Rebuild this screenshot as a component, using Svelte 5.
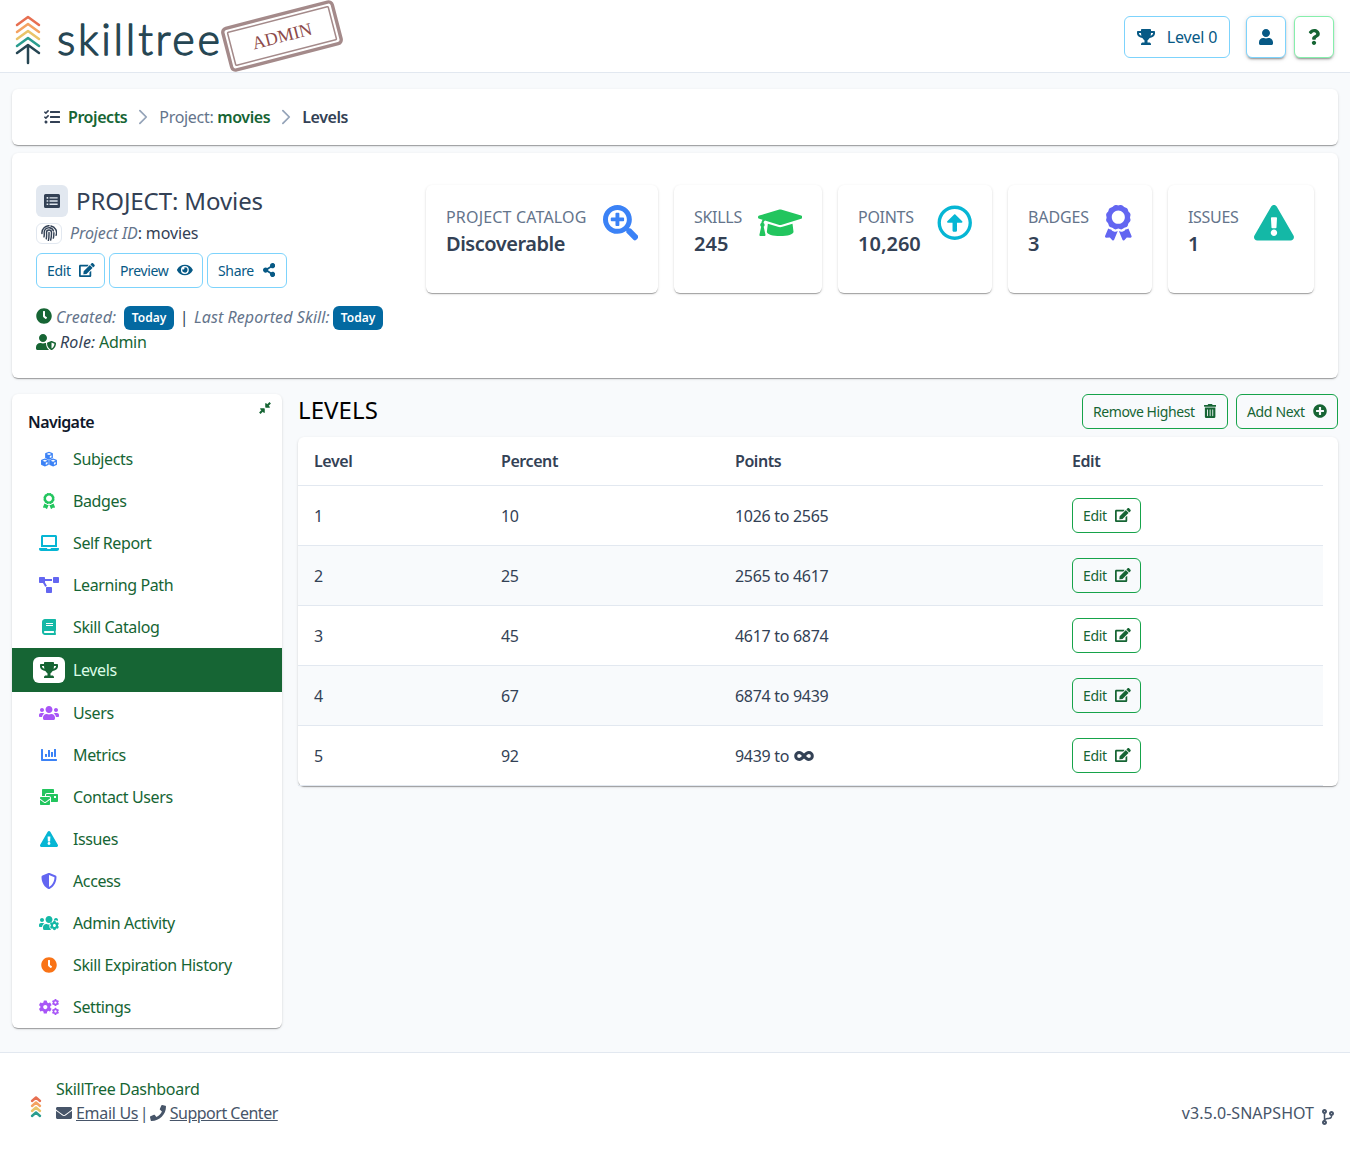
<script>
  const cog = 'M487.4 315.7l-42.6-24.6c4.3-23.2 4.3-47 0-70.2l42.6-24.6c4.9-2.8 7.1-8.6 5.5-14-11.1-35.6-30-67.8-54.7-94.6-3.8-4.1-10-5.1-14.8-2.3L380.8 110c-17.9-15.4-38.5-27.3-60.8-35.1V25.8c0-5.6-3.9-10.5-9.4-11.7-36.7-8.2-74.3-7.8-109.2 0-5.5 1.2-9.4 6.1-9.4 11.7V75c-22.2 7.9-42.8 19.8-60.8 35.1L88.7 85.5c-4.9-2.8-11-1.9-14.8 2.3-24.7 26.7-43.6 58.9-54.7 94.6-1.7 5.4.6 11.2 5.5 14L67.3 221c-4.3 23.2-4.3 47 0 70.2l-42.6 24.6c-4.9 2.8-7.1 8.6-5.5 14 11.1 35.6 30 67.8 54.7 94.6 3.8 4.1 10 5.1 14.8 2.3l42.6-24.6c17.9 15.4 38.5 27.3 60.8 35.1v49.2c0 5.6 3.9 10.5 9.4 11.7 36.7 8.2 74.3 7.8 109.2 0 5.5-1.2 9.4-6.1 9.4-11.7v-49.2c22.2-7.9 42.8-19.8 60.8-35.1l42.6 24.6c4.9 2.8 11 1.9 14.8-2.3 24.7-26.7 43.6-58.9 54.7-94.6 1.5-5.5-.7-11.3-5.6-14.1zM256 336c-44.1 0-80-35.9-80-80s35.9-80 80-80 80 35.9 80 80-35.9 80-80 80z';
  const cube = 'M0 -130L108 -88Q124 -80 124 -64V56Q124 72 110 80L0 130L-110 80Q-124 72 -124 56V-64Q-124 -80 -108 -88ZM0 -88L-78 -58L0 -26L78 -58ZM26 8V76L82 48V-16Z';

  // Each icon: viewBox width (height is 512) and its shapes; s = stroke width, t = transform.
  const icons = {
    trophy: [576, [{ d: 'M552 64H448V24c0-13.3-10.7-24-24-24H152c-13.3 0-24 10.7-24 24v40H24C10.7 64 0 74.7 0 88v56c0 35.7 22.5 72.4 61.9 100.7 31.5 22.7 69.8 37.1 110 41.7C203.3 338.5 240 360 240 360v72h-48c-35.3 0-64 20.7-64 56v12c0 6.6 5.4 12 12 12h296c6.6 0 12-5.4 12-12v-12c0-35.3-28.7-56-64-56h-48v-72s36.7-21.5 68.1-73.6c40.3-4.6 78.6-19 110-41.7 39.3-28.3 61.9-65 61.9-100.7V88c0-13.3-10.7-24-24-24zM99.3 192.8C74.9 175.2 64 155.6 64 144v-16h64.2c1 32.6 5.8 61.2 12.8 86.2-15.1-5.2-29.2-12.4-41.7-21.4zM512 144c0 16.1-17.7 36.1-35.3 48.8-12.5 9-26.7 16.2-41.8 21.4 7-25 11.8-53.6 12.8-86.2H512v16z' }]],
    user: [448, [{ d: 'M224 256c70.7 0 128-57.3 128-128S294.7 0 224 0 96 57.3 96 128s57.3 128 128 128zm89.6 32h-16.7c-22.2 10.2-46.9 16-72.9 16s-50.6-5.8-72.9-16h-16.7C60.2 288 0 348.2 0 422.4V464c0 26.5 21.5 48 48 48h352c26.5 0 48-21.5 48-48v-41.6c0-74.2-60.2-134.4-134.4-134.4z' }]],
    question: [384, [{ d: 'M202.021 0C122.202 0 70.503 32.703 29.914 91.026c-7.363 10.58-5.093 25.086 5.178 32.874l43.138 32.709c10.373 7.865 25.132 6.026 33.253-4.148 25.049-31.381 43.63-49.449 82.757-49.449 30.764 0 68.816 19.799 68.816 49.631 0 22.552-18.617 34.134-48.993 51.164-35.423 19.86-82.299 44.576-82.299 106.405V320c0 13.255 10.745 24 24 24h72.471c13.255 0 24-10.745 24-24v-5.773c0-42.86 125.268-44.645 125.268-160.627C377.504 66.256 286.902 0 202.021 0zM192 373.459c-38.196 0-69.271 31.075-69.271 69.271 0 38.195 31.075 69.27 69.271 69.27s69.271-31.075 69.271-69.271-31.075-69.27-69.271-69.27z' }]],
    tasks: [512, [{ d: 'M139.61 35.5a12 12 0 0 0-17 0L58.93 98.81l-22.7-22.12a12 12 0 0 0-17 0L3.53 92.41a12 12 0 0 0 0 17l47.59 47.4a12.78 12.78 0 0 0 17.61 0l15.59-15.62L156.52 69a12.09 12.09 0 0 0 .09-17zm0 159.19a12 12 0 0 0-17 0l-63.68 63.72-22.7-22.1a12 12 0 0 0-17 0L3.53 252a12 12 0 0 0 0 17L51 316.5a12.77 12.77 0 0 0 17.6 0l15.7-15.69 72.2-72.22a12 12 0 0 0 .09-16.9zM64 368c-26.49 0-48.59 21.5-48.59 48S37.53 464 64 464a48 48 0 0 0 0-96zm432 16H208a16 16 0 0 0-16 16v32a16 16 0 0 0 16 16h288a16 16 0 0 0 16-16v-32a16 16 0 0 0-16-16zm0-320H208a16 16 0 0 0-16 16v32a16 16 0 0 0 16 16h288a16 16 0 0 0 16-16V80a16 16 0 0 0-16-16zm0 160H208a16 16 0 0 0-16 16v32a16 16 0 0 0 16 16h288a16 16 0 0 0 16-16v-32a16 16 0 0 0-16-16z' }]],
    list: [512, [{ d: 'M48 32H464a48 48 0 0 1 48 48V432a48 48 0 0 1-48 48H48a48 48 0 0 1-48-48V80a48 48 0 0 1 48-48ZM84 128v52h52v-52ZM84 230v52h52v-52ZM84 332v52h52v-52ZM176 132v44h260v-44ZM176 234v44h260v-44ZM176 336v44h260v-44Z' }]],
    fingerprint: [512, [{ s: 46, d: 'M30 270V240A226 226 0 0 1 256 22M318 30A226 226 0 0 1 484 330M96 380Q108 330 102 240A154 154 0 0 1 400 190M412 250Q414 340 396 420M170 440Q186 350 176 240A80 80 0 0 1 336 240Q338 370 310 480M256 240Q260 400 236 500' }]],
    edit: [576, [{ d: 'M402.6 83.2l90.2 90.2c3.8 3.8 3.8 10 0 13.8L274.4 405.6l-92.8 10.3c-12.4 1.4-22.9-9.1-21.5-21.5l10.3-92.8L388.8 83.2c3.8-3.8 10-3.8 13.8 0zm162-22.9l-48.8-48.8c-15.2-15.2-39.9-15.2-55.2 0l-35.4 35.4c-3.8 3.8-3.8 10 0 13.8l90.2 90.2c3.8 3.8 10 3.8 13.8 0l35.4-35.4c15.2-15.3 15.2-40 0-55.2zM384 346.2V448H64V128h229.8c3.2 0 6.2-1.3 8.5-3.5l40-40c7.6-7.6 2.2-20.5-8.5-20.5H48C21.5 64 0 85.5 0 112v352c0 26.5 21.5 48 48 48h352c26.5 0 48-21.5 48-48V306.2c0-10.7-12.9-16-20.5-8.5l-40 40c-2.2 2.3-3.5 5.3-3.5 8.5z' }]],
    eye: [576, [{ d: 'M572.52 241.4C518.29 135.59 410.93 64 288 64S57.68 135.64 3.48 241.41a32.35 32.35 0 0 0 0 29.19C57.71 376.41 165.07 448 288 448s230.32-71.64 284.52-177.41a32.35 32.35 0 0 0 0-29.19zM288 400a144 144 0 1 1 144-144 143.93 143.93 0 0 1-144 144zm0-240a95.31 95.31 0 0 0-25.31 3.79 47.85 47.85 0 0 1-66.9 66.9A95.78 95.78 0 1 0 288 160z' }]],
    share: [448, [{ d: 'M352 320c-22.608 0-43.387 7.819-59.79 20.895l-102.486-64.054a96.551 96.551 0 0 0 0-41.683l102.486-64.054C308.613 184.181 329.392 192 352 192c53.019 0 96-42.981 96-96S405.019 0 352 0s-96 42.981-96 96c0 7.158.79 14.13 2.276 20.841L155.79 180.895C139.387 167.819 118.608 160 96 160c-53.019 0-96 42.981-96 96s42.981 96 96 96c22.608 0 43.387-7.819 59.79-20.895l102.486 64.054A96.301 96.301 0 0 0 256 416c0 53.019 42.981 96 96 96s96-42.981 96-96-42.981-96-96-96z' }]],
    clock: [512, [{ d: 'M256,8C119,8,8,119,8,256S119,504,256,504,504,393,504,256,393,8,256,8Zm92.49,313h0l-20,25a16,16,0,0,1-22.49,2.5h0l-67-49.72a40,40,0,0,1-15-31.23V112a16,16,0,0,1,16-16h32a16,16,0,0,1,16,16V256l58,42.5A16,16,0,0,1,348.49,321Z' }]],
    userShield: [640, [{ d: 'M622.3 271.1l-115.2-45c-4.1-1.6-12.6-3.7-22.2 0l-115.2 45c-10.7 4.2-17.7 14-17.7 24.9 0 111.6 68.7 188.8 132.9 213.9 9.6 3.7 18 1.6 22.2 0C558.4 489.9 640 420.5 640 296c0-10.9-7-20.7-17.7-24.9zM496 462.4V273.3l95.5 37.3c-5.6 87.1-60.9 135.4-95.5 151.8zM224 256c70.7 0 128-57.3 128-128S294.7 0 224 0 96 57.3 96 128s57.3 128 128 128zm96 40c0-2.5.8-4.8 1.1-7.2-2.5-.1-4.9-.8-7.5-.8h-16.7c-22.2 10.2-46.9 16-72.9 16s-50.6-5.8-72.9-16h-16.7C60.2 288 0 348.2 0 422.4V464c0 26.5 21.5 48 48 48h352c6.8 0 13.3-1.5 19.2-4-54-42.9-99.2-116.7-99.2-212z' }]],
    searchPlus: [512, [{ d: 'M304 192v32c0 6.6-5.4 12-12 12h-56v56c0 6.6-5.4 12-12 12h-32c-6.6 0-12-5.4-12-12v-56h-56c-6.6 0-12-5.4-12-12v-32c0-6.6 5.4-12 12-12h56v-56c0-6.6 5.4-12 12-12h32c6.6 0 12 5.4 12 12v56h56c6.6 0 12 5.4 12 12zm201 284.7L476.7 505c-9.4 9.4-24.6 9.4-33.9 0L343 405.3c-4.5-4.5-7-10.6-7-17V372c-35.3 27.6-79.7 44-128 44C93.1 416 0 322.9 0 208S93.1 0 208 0s208 93.1 208 208c0 48.3-16.4 92.7-44 128h16.3c6.4 0 12.5 2.5 17 7l99.7 99.7c9.3 9.4 9.3 24.6 0 34zM344 208c0-75.2-60.8-136-136-136S72 132.8 72 208s60.8 136 136 136 136-60.8 136-136z' }]],
    cap: [640, [{ d: 'M622.34 153.2L343.4 67.5c-15.2-4.67-31.6-4.67-46.79 0L17.66 153.2c-23.54 7.23-23.54 38.36 0 45.59l48.63 14.94c-10.67 13.19-17.23 29.28-17.88 46.9C38.78 266.15 32 276.11 32 288c0 10.78 5.68 19.85 13.86 25.65L20.33 428.53C18.11 438.52 25.71 448 35.94 448h56.11c10.24 0 17.84-9.48 15.62-19.47L82.14 313.65C90.32 307.85 96 298.78 96 288c0-11.57-6.47-21.25-15.66-26.87.76-15.02 8.44-28.3 20.69-36.72L296.6 284.5c9.06 2.78 26.44 6.25 46.79 0l278.95-85.7c23.55-7.24 23.55-38.36 0-45.6zM352.79 315.09c-28.53 8.76-52.84 3.92-65.59 0l-145.02-44.55L128 384c0 35.35 85.96 64 192 64s192-28.65 192-64l-14.18-113.47-145.03 44.56z' }]],
    arrowUp: [512, [{ d: 'M256 504c137 0 248-111 248-248S393 8 256 8 8 119 8 256s111 248 248 248zm0-448c110.5 0 200 89.5 200 200s-89.5 200-200 200S56 366.5 56 256 145.5 56 256 56zm20 328h-40c-6.6 0-12-5.4-12-12V256h-67c-10.7 0-16-12.9-8.5-20.5l99-99c4.7-4.7 12.3-4.7 17 0l99 99c7.6 7.6 2.2 20.5-8.5 20.5h-67v116c0 6.6-5.4 12-12 12z' }]],
    award: [384, [{ d: 'M97.12 362.63c-8.69-8.69-4.16-6.24-25.12-11.85-9.51-2.55-17.87-7.45-25.43-13.32L1.2 448.7c-4.39 10.77 3.81 22.47 15.43 22.03l52.69-2.01L105.56 507c8 8.44 22.04 5.81 26.43-4.96l52.05-127.62c-10.84 6.04-22.87 9.58-35.31 9.58-19.5 0-37.82-7.59-51.61-21.37zM382.8 448.7l-45.37-111.24c-7.56 5.88-15.92 10.77-25.43 13.32-21.07 5.64-16.45 3.18-25.12 11.85-13.79 13.78-32.12 21.37-51.62 21.37-12.44 0-24.47-3.55-35.31-9.58L252 502.04c4.39 10.77 18.44 13.4 26.43 4.96l36.25-38.28 52.69 2.01c11.62.44 19.82-11.27 15.43-22.03zM263 340c15.28-15.55 17.03-14.21 38.79-20.14 13.89-3.79 24.75-14.84 28.47-28.98 7.48-28.4 5.54-24.97 25.95-45.75 10.17-10.35 14.14-25.44 10.42-39.58-7.47-28.38-7.48-24.42 0-52.83 3.72-14.14-.25-29.23-10.42-39.58-20.41-20.78-18.47-17.36-25.95-45.75-3.72-14.14-14.58-25.19-28.47-28.98-27.88-7.61-24.52-5.62-44.95-26.41-10.17-10.35-25-14.4-38.89-10.61-27.87 7.6-23.98 7.61-51.9 0-13.89-3.79-28.72.25-38.89 10.61-20.41 20.78-17.05 18.8-44.94 26.41-13.89 3.79-24.75 14.84-28.47 28.98-7.47 28.39-5.54 24.97-25.95 45.75-10.17 10.35-14.15 25.44-10.42 39.58 7.47 28.36 7.48 24.4 0 52.82-3.72 14.14.25 29.23 10.42 39.59 20.41 20.78 18.47 17.35 25.95 45.75 3.72 14.14 14.58 25.19 28.47 28.98C104.6 325.96 106.27 325 121 340c13.23 13.47 33.84 15.88 49.74 5.82a39.676 39.676 0 0 1 42.53 0c15.89 10.06 36.5 7.65 49.73-5.82zM97.66 175.96c0-53.03 42.24-96.02 94.34-96.02s94.34 42.99 94.34 96.02-42.24 96.02-94.34 96.02-94.34-42.99-94.34-96.02z' }]],
    warning: [576, [{ d: 'M569.517 440.013C587.975 472.007 564.806 512 527.94 512H48.054c-36.937 0-59.999-40.055-41.577-71.987L246.423 23.985c18.467-32.009 64.72-31.951 83.154 0l239.94 416.028zM288 354c-25.405 0-46 20.595-46 46s20.595 46 46 46 46-20.595 46-46-20.595-46-46-46zm-43.673-165.346l7.418 136c.347 6.364 5.609 11.346 11.982 11.346h48.546c6.373 0 11.635-4.982 11.982-11.346l7.418-136c.375-6.874-5.098-12.654-11.982-12.654h-63.383c-6.884 0-12.356 5.78-11.981 12.654z' }]],
    cubes: [512, [{ d: cube, t: 'translate(256 150)' }, { d: cube, t: 'translate(125 366)' }, { d: cube, t: 'translate(387 366)' }]],
    laptop: [640, [{ d: 'M624 416H381.54c-.74 19.81-14.71 32-32.74 32H288c-18.69 0-33.02-17.47-32.77-32H16c-8.8 0-16 7.2-16 16v16c0 35.2 28.8 64 64 64h512c35.2 0 64-28.8 64-64v-16c0-8.8-7.2-16-16-16zM576 48c0-26.4-21.6-48-48-48H112C85.6 0 64 21.6 64 48v336h512V48zm-64 272H128V64h384v256z' }]],
    diagram: [640, [{ d: 'M384 320H256c-17.67 0-32 14.33-32 32v128c0 17.67 14.33 32 32 32h128c17.67 0 32-14.33 32-32V352c0-17.67-14.33-32-32-32zM192 32c0-17.67-14.33-32-32-32H32C14.33 0 0 14.33 0 32v128c0 17.67 14.33 32 32 32h95.72l73.16 128.04C211.98 300.98 232.4 288 256 288h.28L192 175.51V128h224V64H192V32zM608 0H480c-17.67 0-32 14.33-32 32v128c0 17.67 14.33 32 32 32h128c17.67 0 32-14.33 32-32V32c0-17.67-14.33-32-32-32z' }]],
    book: [448, [{ d: 'M448 360V24c0-13.3-10.7-24-24-24H96C43 0 0 43 0 96v320c0 53 43 96 96 96h328c13.3 0 24-10.7 24-24v-16c0-7.5-3.5-14.3-8.9-18.7-4.2-15.4-4.2-59.3 0-74.7 5.4-4.3 8.9-11.1 8.9-18.6zM128 134c0-3.3 2.7-6 6-6h212c3.3 0 6 2.7 6 6v20c0 3.3-2.7 6-6 6H134c-3.3 0-6-2.7-6-6v-20zm0 64c0-3.3 2.7-6 6-6h212c3.3 0 6 2.7 6 6v20c0 3.3-2.7 6-6 6H134c-3.3 0-6-2.7-6-6v-20zm253.4 250H96c-17.7 0-32-14.3-32-32 0-17.6 14.4-32 32-32h285.4c-1.9 17.1-1.9 46.9 0 64z' }]],
    users: [640, [{ d: 'M96 224c35.3 0 64-28.7 64-64s-28.7-64-64-64-64 28.7-64 64 28.7 64 64 64zm448 0c35.3 0 64-28.7 64-64s-28.7-64-64-64-64 28.7-64 64 28.7 64 64 64zm32 32h-64c-17.6 0-33.5 7.1-45.1 18.6 40.3 22.1 68.9 62 75.1 109.4h66c17.7 0 32-14.3 32-32v-32c0-35.3-28.7-64-64-64zm-256 0c61.9 0 112-50.1 112-112S381.9 32 320 32 208 82.1 208 144s50.1 112 112 112zm76.8 32h-8.3c-20.8 10-43.9 16-68.5 16s-47.6-6-68.5-16h-8.3C179.6 288 128 339.6 128 403.2V432c0 26.5 21.5 48 48 48h288c26.5 0 48-21.5 48-48v-28.8c0-63.6-51.6-115.2-115.2-115.2zm-223.7-13.4C161.5 263.1 145.6 256 128 256H64c-35.3 0-64 28.7-64 64v32c0 17.7 14.3 32 32 32h65.9c6.3-47.4 34.9-87.3 75.2-109.4z' }]],
    chart: [512, [{ d: 'M332.8 320h38.4c6.4 0 12.8-6.4 12.8-12.8V172.8c0-6.4-6.4-12.8-12.8-12.8h-38.4c-6.4 0-12.8 6.4-12.8 12.8v134.4c0 6.4 6.4 12.8 12.8 12.8zm96 0h38.4c6.4 0 12.8-6.4 12.8-12.8V76.8c0-6.4-6.4-12.8-12.8-12.8h-38.4c-6.4 0-12.8 6.4-12.8 12.8v230.4c0 6.4 6.4 12.8 12.8 12.8zm-288 0h38.4c6.4 0 12.8-6.4 12.8-12.8v-70.4c0-6.4-6.4-12.8-12.8-12.8h-38.4c-6.4 0-12.8 6.4-12.8 12.8v70.4c0 6.4 6.4 12.8 12.8 12.8zm96 0h38.4c6.4 0 12.8-6.4 12.8-12.8V108.8c0-6.4-6.4-12.8-12.8-12.8h-38.4c-6.4 0-12.8 6.4-12.8 12.8v198.4c0 6.4 6.4 12.8 12.8 12.8zM496 384H64V80c0-8.84-7.16-16-16-16H16C7.16 64 0 71.16 0 80v336c0 17.67 14.33 32 32 32h464c8.84 0 16-7.16 16-16v-32c0-8.84-7.16-16-16-16z' }]],
    mail: [576, [{ d: 'M160 448c-25.6 0-51.2-22.4-64-32-64-44.8-83.2-60.8-96-70.4V480c0 17.67 14.33 32 32 32h256c17.67 0 32-14.33 32-32V345.6c-12.8 9.6-32 25.6-96 70.4-12.8 9.6-38.4 32-64 32zm128-192H32c-17.67 0-32 14.33-32 32v16c25.6 19.2 22.4 19.2 115.2 86.4 9.6 6.4 28.8 25.6 44.8 25.6s35.2-19.2 44.8-22.4c92.8-67.2 89.6-67.2 115.2-86.4V288c0-17.67-14.33-32-32-32zm256-96H224c-17.67 0-32 14.33-32 32v32h96c33.21 0 60.59 25.42 63.71 57.82l.29-.22V416h192c17.67 0 32-14.33 32-32V192c0-17.67-14.33-32-32-32zm-32 128h-64v-64h64v64zm-352-96c0-35.29 28.71-64 64-64h224V32c0-17.67-14.33-32-32-32H96C78.33 0 64 14.33 64 32v192h96v-32z' }]],
    shield: [512, [{ d: 'M466.5 83.7l-192-80a48.15 48.15 0 0 0-36.9 0l-192 80C27.7 91.1 16 108.6 16 128c0 198.5 114.5 335.7 221.5 380.3 11.8 4.9 25.1 4.9 36.9 0C360.1 472.6 496 349.3 496 128c0-19.4-11.7-36.9-29.5-44.3zM256.1 446.3l-.1-381 175.9 73.3c-3.3 151.4-82.1 261.1-175.8 307.7z' }]],
    usersCog: [640, [
      { d: 'M96 224c35.3 0 64-28.7 64-64s-28.7-64-64-64-64 28.7-64 64 28.7 64 64 64zM320 256c61.9 0 112-50.1 112-112S381.9 32 320 32 208 82.1 208 144s50.1 112 112 112zM173.1 274.6C161.5 263.1 145.6 256 128 256H64c-35.3 0-64 28.7-64 64v32c0 17.7 14.3 32 32 32h65.9c6.3-47.4 34.9-87.3 75.2-109.4zM544 96a64 64 0 0 1 56 96Q540 150 484 182A64 64 0 0 1 544 96ZM243 288H252Q310 318 352 298Q316 330 334 370Q326 410 366 440L384 480H176a48 48 0 0 1-48-48V403A115 115 0 0 1 243 288Z' },
      { d: cog, t: 'translate(340 182) scale(.6)' }]],
    cogs: [640, [{ d: cog, t: 'translate(-14 42) scale(.84)' }, { d: cog, t: 'translate(410 -4) scale(.46)' }, { d: cog, t: 'translate(410 280) scale(.46)' }]],
    infinity: [640, [{ s: 96, d: 'M320 256C270 190 230 144 166 144A112 112 0 0 0 166 368C230 368 270 322 320 256C370 190 410 144 474 144A112 112 0 0 1 474 368C410 368 370 322 320 256Z' }]],
    envelope: [512, [{ d: 'M502.3 190.8c3.9-3.1 9.7-.2 9.7 4.7V400c0 26.5-21.5 48-48 48H48c-26.5 0-48-21.5-48-48V195.6c0-5 5.7-7.8 9.7-4.7 22.4 17.4 52.1 39.5 154.1 113.6 21.1 15.4 56.7 47.8 92.2 47.6 35.7.3 72-32.8 92.3-47.6 102-74.1 131.6-96.3 154-113.7zM256 320c23.2.4 56.6-29.2 73.4-41.4 132.7-96.3 142.8-104.7 173.4-128.7 5.8-4.5 9.2-11.5 9.2-18.9v-19c0-26.5-21.5-48-48-48H48c-26.5 0-48 21.5-48 48v19c0 7.4 3.4 14.3 9.2 18.9 30.6 23.9 40.7 32.4 173.4 128.7 16.8 12.2 50.2 41.8 73.4 41.4z' }]],
    phone: [512, [{ d: 'M493.4 24.6l-104-24c-11.3-2.6-22.9 3.3-27.5 13.9l-48 112c-4.2 9.8-1.4 21.3 6.9 28l60.6 49.6c-36 76.7-98.9 140.5-177.2 177.2l-49.6-60.6c-6.8-8.3-18.2-11.1-28-6.9l-112 48C3.9 366.5-2 378.1.6 389.4l24 104C27.1 504.2 36.7 512 48 512c256.1 0 464-207.5 464-464 0-11.2-7.7-20.9-18.6-23.4z' }]],
    branch: [384, [{ d: 'M384 144c0-44.2-35.8-80-80-80s-80 35.8-80 80c0 36.4 24.3 67.1 57.5 76.8-.6 16.1-4.2 28.5-11 36.9-15.4 19.2-49.3 22.4-85.2 25.7-28.2 2.6-57.4 5.4-81.3 16.9v-144c32.5-10.2 56-40.5 56-76.3 0-44.2-35.8-80-80-80S0 35.8 0 80c0 35.8 23.5 66.1 56 76.3v199.3C23.5 365.9 0 396.2 0 432c0 44.2 35.8 80 80 80s80-35.8 80-80c0-34-21.2-63.1-51.2-74.6 3.1-5.2 7.8-9.8 14.9-13.4 16.2-8.2 40.4-10.4 66.1-12.8 42.2-3.9 90-8.4 118.2-43.4 14-17.4 21.1-39.8 21.6-67.9 31.6-10.8 54.4-40.7 54.4-75.9zM80 64c8.8 0 16 7.2 16 16s-7.2 16-16 16-16-7.2-16-16 7.2-16 16-16zm0 384c-8.8 0-16-7.2-16-16s7.2-16 16-16 16 7.2 16 16-7.2 16-16 16zm224-320c8.8 0 16 7.2 16 16s-7.2 16-16 16-16-7.2-16-16 7.2-16 16-16z' }]],
    trash: [448, [{ d: 'M32 464a48 48 0 0 0 48 48h288a48 48 0 0 0 48-48V128H32zm272-256a16 16 0 0 1 32 0v224a16 16 0 0 1-32 0zm-96 0a16 16 0 0 1 32 0v224a16 16 0 0 1-32 0zm-96 0a16 16 0 0 1 32 0v224a16 16 0 0 1-32 0zM432 32H312l-9.4-18.7A24 24 0 0 0 281.1 0H166.8a23.72 23.72 0 0 0-21.4 13.3L136 32H16A16 16 0 0 0 0 48v32a16 16 0 0 0 16 16h416a16 16 0 0 0 16-16V48a16 16 0 0 0-16-16z' }]],
    plus: [512, [{ d: 'M256 8C119 8 8 119 8 256s111 248 248 248 248-111 248-248S393 8 256 8zm144 276c0 6.6-5.4 12-12 12h-92v92c0 6.6-5.4 12-12 12h-56c-6.6 0-12-5.4-12-12v-92h-92c-6.6 0-12-5.4-12-12v-56c0-6.6 5.4-12 12-12h92v-92c0-6.6 5.4-12 12-12h56c6.6 0 12 5.4 12 12v92h92c6.6 0 12 5.4 12 12v56z' }]],
    compress: [512, [{ d: 'M508 66L446 4L352 98L308 54Q282 34 266 62V218Q268 244 294 246H450Q478 230 458 204L414 160ZM4 446L66 508L160 414L204 458Q230 478 246 450V294Q244 268 218 266H62Q34 282 54 308L98 352Z' }]],
    chevron: [320, [{ s: 56, d: 'M60 50L264 256L60 462' }]]
  };

  const stats = [
    { label: 'PROJECT CATALOG', value: 'Discoverable', icon: 'searchPlus', tone: 'blue', size: 'w1' },
    { label: 'SKILLS', value: '245', icon: 'cap', tone: 'green', size: 'w2' },
    { label: 'POINTS', value: '10,260', icon: 'arrowUp', tone: 'cyan', size: 'w3' },
    { label: 'BADGES', value: '3', icon: 'award', tone: 'indigo', size: 'w4' },
    { label: 'ISSUES', value: '1', icon: 'warning', tone: 'teal', size: 'w5' }
  ];

  const nav = [
    ['Subjects', 'cubes', 'blue'],
    ['Badges', 'award', 'green'],
    ['Self Report', 'laptop', 'cyan'],
    ['Learning Path', 'diagram', 'indigo'],
    ['Skill Catalog', 'book', 'teal'],
    ['Levels', 'trophy', 'active'],
    ['Users', 'users', 'purple'],
    ['Metrics', 'chart', 'blue'],
    ['Contact Users', 'mail', 'green'],
    ['Issues', 'warning', 'cyan'],
    ['Access', 'shield', 'indigo'],
    ['Admin Activity', 'usersCog', 'teal'],
    ['Skill Expiration History', 'clock', 'orange'],
    ['Settings', 'cogs', 'purple']
  ];

  const levels = [
    [1, 10, '1026 to 2565'],
    [2, 25, '2565 to 4617'],
    [3, 45, '4617 to 6874'],
    [4, 67, '6874 to 9439'],
    [5, 92, '9439 to']
  ];
</script>

{#snippet icon(name, h = 16)}
  <svg class="icon" width={(icons[name][0] / 512) * h} height={h} viewBox="0 0 {icons[name][0]} 512" aria-hidden="true">
    {#each icons[name][1] as p}
      {#if p.s}
        <path d={p.d} fill="none" stroke="currentColor" stroke-width={p.s} stroke-linecap="round" stroke-linejoin="round" />
      {:else}
        <path d={p.d} transform={p.t} fill="currentColor" fill-rule="evenodd" />
      {/if}
    {/each}
  </svg>
{/snippet}

<div class="page">
  <header>
    <svg class="logo" width="346" height="72" viewBox="0 0 346 72" role="img" aria-label="skilltree admin">
      <g fill="none" stroke-width="2.5" stroke-linecap="round" stroke-linejoin="round">
        <path stroke="#e76f51" d="M17 25L28 17L39 25" />
        <path stroke="#f4a261" d="M17 32L28 24L39 32" />
        <path stroke="#e9c46a" d="M17 39L28 31L39 39" />
        <path stroke="#2a9d8f" d="M17 46L28 38L39 46" />
        <path stroke="#264653" d="M17 53L28 45L39 53M28 46V63" />
      </g>
      <text class="word" x="57" y="55" textLength="163">skilltree</text>
      <g transform="translate(282 36) rotate(-14.5)" fill="none" stroke="#a48a8a">
        <rect x="-56.5" y="-21.5" width="113" height="43" rx="4" stroke-width="3.4" />
        <rect x="-52" y="-17" width="104" height="34" rx="1" stroke-width="1.5" />
        <text class="stamp" x="0" y="6" text-anchor="middle">ADMIN</text>
      </g>
    </svg>
    <div class="tools">
      <button class="btn sky level">{@render icon('trophy')}<span>Level 0</span></button>
      <button class="btn sky square">{@render icon('user')}</button>
      <button class="btn lime square">{@render icon('question')}</button>
    </div>
  </header>

  <nav class="card crumbs">
    {@render icon('tasks')}
    <b class="green-text first">Projects</b>
    <span class="sep">{@render icon('chevron')}</span>
    <span class="muted">Project: <b class="green-text">movies</b></span>
    <span class="sep">{@render icon('chevron')}</span>
    <b>Levels</b>
  </nav>

  <section class="card project">
    <div class="info">
      <div class="title"><span class="tile">{@render icon('list')}</span><h1>PROJECT: Movies</h1></div>
      <div class="pid"><span class="print">{@render icon('fingerprint')}</span><span><i class="muted">Project ID</i>: movies</span></div>
      <div class="actions">
        <button class="btn sky small b1">Edit {@render icon('edit', 14)}</button>
        <button class="btn sky small b2">Preview {@render icon('eye', 14)}</button>
        <button class="btn sky small b3">Share {@render icon('share', 14)}</button>
      </div>
      <div class="meta">
        <span class="green-text lead">{@render icon('clock')}</span>
        <i class="muted created">Created:</i><span class="tag">Today</span>
        <span class="bar">|</span>
        <i class="muted reported">Last Reported Skill:</i><span class="tag">Today</span>
      </div>
      <div class="role"><span class="green-text lead">{@render icon('userShield')}</span><i>Role:</i><span class="green-text">Admin</span></div>
    </div>
    <div class="stats">
      {#each stats as s}
        <div class="card stat {s.size}">
          <div><div class="muted label">{s.label}</div><strong>{s.value}</strong></div>
          <span class={s.tone}>{@render icon(s.icon, 35.5)}</span>
        </div>
      {/each}
    </div>
  </section>

  <div class="columns">
    <aside class="card side">
      <div class="side-head"><b>Navigate</b><span class="green-text">{@render icon('compress', 12)}</span></div>
      {#each nav as [label, ic, tone]}
        <a class="item" class:current={tone === 'active'} href="#{ic}">
          <span class="glyph {tone}">{@render icon(ic)}</span>{label}
        </a>
      {/each}
    </aside>

    <main>
      <div class="main-head">
        <h2>LEVELS</h2>
        <div class="main-actions">
          <button class="btn leaf small b4">Remove Highest {@render icon('trash', 14)}</button>
          <button class="btn leaf small b5">Add Next {@render icon('plus', 14)}</button>
        </div>
      </div>
      <div class="card table">
        <div class="row head"><span>Level</span><span>Percent</span><span>Points</span><span>Edit</span></div>
        {#each levels as [n, pct, pts]}
          <div class="row" class:odd={n % 2 === 0}>
            <span>{n}</span><span>{pct}</span>
            <span class="pts">{pts}{#if n === 5}{@render icon('infinity')}{/if}</span>
            <span><button class="btn leaf small b1">Edit {@render icon('edit', 14)}</button></span>
          </div>
        {/each}
      </div>
    </main>
  </div>

  <footer>
    <svg class="mini" width="12" height="24" viewBox="0 0 12 24" aria-hidden="true">
      <g fill="none" stroke-width="2.4" stroke-linecap="round" stroke-linejoin="round">
        <path stroke="#e76f51" d="M2 6L6 2.5L10 6" />
        <path stroke="#f4a261" d="M2 11L6 7.5L10 11" />
        <path stroke="#e9c46a" d="M2 16L6 12.5L10 16" />
        <path stroke="#2a9d8f" d="M2 21L6 17.5L10 21" />
      </g>
    </svg>
    <div class="links">
      <div class="green-text">SkillTree Dashboard</div>
      <div class="contact">{@render icon('envelope')}<u>Email Us</u><span>|</span>{@render icon('phone')}<u class="support">Support Center</u></div>
    </div>
    <div class="version">v3.5.0-SNAPSHOT {@render icon('branch')}</div>
  </footer>
</div>

<style>
  :global(body) { margin: 0; background: #f8fafc; }
  .page { width: 1350px; height: 1149px; display: flex; flex-direction: column; font: 16px/24px "Noto Sans", sans-serif; color: #334155; background: #f8fafc; letter-spacing: -.3px; white-space: nowrap; }
  .page * { box-sizing: border-box; }
  .icon { display: block; flex: none; }
  .card { background: #fff; border-radius: 6px; box-shadow: 0 2px 1px -1px rgba(0,0,0,.2), 0 1px 1px 0 rgba(0,0,0,.14), 0 1px 3px 0 rgba(0,0,0,.12); }
  .muted { color: #64748b; }
  .green-text { color: #166534; }
  b { font-weight: 600; letter-spacing: -.42px; }

  header { height: 73px; flex: none; display: flex; justify-content: space-between; background: #fff; border-bottom: 1px solid #e2e8f0; }
  .word { font: 300 43px Lato, sans-serif; fill: #264653; stroke: #264653; stroke-width: 1.3; stroke-linejoin: round; letter-spacing: 0; }
  .stamp { font: 18px "Liberation Serif", serif; fill: #8d4a4a; stroke: none; letter-spacing: 0; }
  .tools { display: flex; padding: 16px 16px 0 0; gap: 8px; }
  .btn { display: flex; align-items: center; justify-content: center; font: inherit; letter-spacing: inherit; background: transparent; border: 1px solid; border-radius: 6px; padding: 0; }
  .sky { border-color: #7dd3fc; color: #075985; }
  .lime { border-color: #86efac; color: #166534; }
  .leaf { border-color: #16a34a; color: #166534; }
  .level { width: 106px; height: 42px; gap: 12px; margin-right: 8px; letter-spacing: -.2px; }
  .square { width: 40px; height: 42px; background: #fff; box-shadow: 0 3px 1px -2px rgba(0,0,0,.2), 0 2px 2px 0 rgba(0,0,0,.14), 0 1px 5px 0 rgba(0,0,0,.12); }
  .small { height: 35px; padding: 0 9px 0 10px; font-size: 14px; justify-content: space-between; letter-spacing: -.35px; }
  .small .icon { margin-bottom: 2px; }
  .b1 { width: 69px; } .b2 { width: 94px; } .b3 { width: 80px; padding-right: 11px; } .b4 { width: 146px; padding-right: 11px; letter-spacing: -.42px; } .b5 { width: 102px; padding-right: 10px; }

  .crumbs { margin: 16px 12px 0; height: 56px; flex: none; padding-left: 32px; display: flex; align-items: center; }
  .first { margin-left: 8px; }
  .sep { color: #94a3b8; margin: 0 11px; }

  .project { margin: 8px 12px 0; height: 225px; flex: none; display: flex; justify-content: space-between; padding: 32px 24px 0; }
  .title { display: flex; align-items: center; height: 32px; gap: 8px; }
  .tile { width: 32px; height: 32px; border-radius: 6px; background: #e2e8f0; display: grid; place-items: center; }
  h1, h2 { font-size: 24px; line-height: 32px; font-weight: 400; margin: 0; letter-spacing: -.1px; }
  .pid { display: flex; align-items: center; gap: 8px; height: 24px; margin-top: 4px; letter-spacing: -.12px; }
  .print { width: 26px; height: 21px; border: 1px solid #e2e8f0; border-radius: 6px; display: grid; place-items: center; }
  .actions { display: flex; gap: 4px; margin-top: 8px; }
  .meta { display: flex; align-items: center; height: 24px; margin-top: 17px; }
  .meta .icon { margin-bottom: 2px; }
  .lead { margin-right: 4px; }
  .created { width: 64px; margin-right: 4px; letter-spacing: .15px; }
  .reported { width: 136px; margin-right: 3px; letter-spacing: .08px; }
  .bar { width: 20px; text-align: center; }
  .tag { background: #0369a1; color: #fff; font-size: 12px; font-weight: 600; width: 50px; height: 24px; border-radius: 6px; text-align: center; letter-spacing: 0; position: relative; top: 1px; }
  .role { display: flex; align-items: center; height: 24px; margin-top: 1px; }
  .role i { width: 36px; margin-right: 3px; letter-spacing: .2px; }

  .stats { display: flex; gap: 16px; }
  .stat { height: 108px; padding: 20px; display: flex; justify-content: space-between; }
  .stat .label { line-height: 24px; }
  .stat strong { font-size: 20px; line-height: 28px; font-weight: 600; display: block; padding-top: 1px; letter-spacing: 0; }
  .w1 { width: 232px; } .w2 { width: 148px; } .w3 { width: 154px; } .w4 { width: 144px; } .w5 { width: 146px; }
  .w1 .label { letter-spacing: .17px; }
  .w1 strong { letter-spacing: -.47px; }
  .w4 .label { letter-spacing: -.12px; }

  .blue { color: #3b82f6; } .green { color: #22c55e; } .cyan { color: #06b6d4; } .indigo { color: #6366f1; }
  .teal { color: #14b8a6; } .purple { color: #a855f7; } .orange { color: #f97316; } .active { color: #166534; }

  .columns { display: flex; gap: 16px; margin: 16px 12px 0; align-items: flex-start; }
  .side { width: 270px; height: 634px; }
  .side-head { height: 44px; display: flex; justify-content: space-between; padding: 16px 11px 0 16px; color: #0f172a; }
  .side-head b { letter-spacing: -.55px; }
  .side-head span { margin-top: -8px; }
  .item { display: flex; align-items: center; height: 42px; padding-left: 21px; gap: 8px; color: #166534; text-decoration: none; letter-spacing: -.38px; }
  .glyph { width: 32px; height: 26px; border-radius: 6px; display: grid; place-items: center; }
  .current { height: 44px; background: #166534; color: #dcfce7; }
  .current .glyph { background: #fff; }

  main { flex: 1; }
  .main-head { display: flex; justify-content: space-between; height: 43px; }
  h2 { color: #000; letter-spacing: .1px; }
  .main-actions { display: flex; gap: 8px; }
  .row { display: grid; grid-template-columns: 187px 234px 337px 267px; width: 1025px; height: 60px; align-items: center; border-bottom: 1px solid #e2e8f0; }
  .row > span { padding-left: 16px; }
  .head { height: 49px; font-weight: 600; letter-spacing: -.42px; }
  .odd { background: #f8fafc; }
  .pts { display: flex; align-items: center; gap: 5px; }

  footer { margin-top: 24px; flex: 1; border-top: 1px solid #e2e8f0; background: #fff; display: flex; padding: 24px 16px 0 30px; }
  .mini { margin-top: 18px; }
  .links { margin-left: 14px; flex: 1; }
  .contact { display: flex; align-items: center; gap: 4px; color: #475569; }
  .contact span { margin: 0 -2.5px; }
  .support { letter-spacing: -.5px; }
  .version { display: flex; align-items: center; gap: 8px; height: 24px; margin-top: 24px; color: #475569; letter-spacing: .03px; }
  .version .icon { margin-top: 8px; }
</style>
